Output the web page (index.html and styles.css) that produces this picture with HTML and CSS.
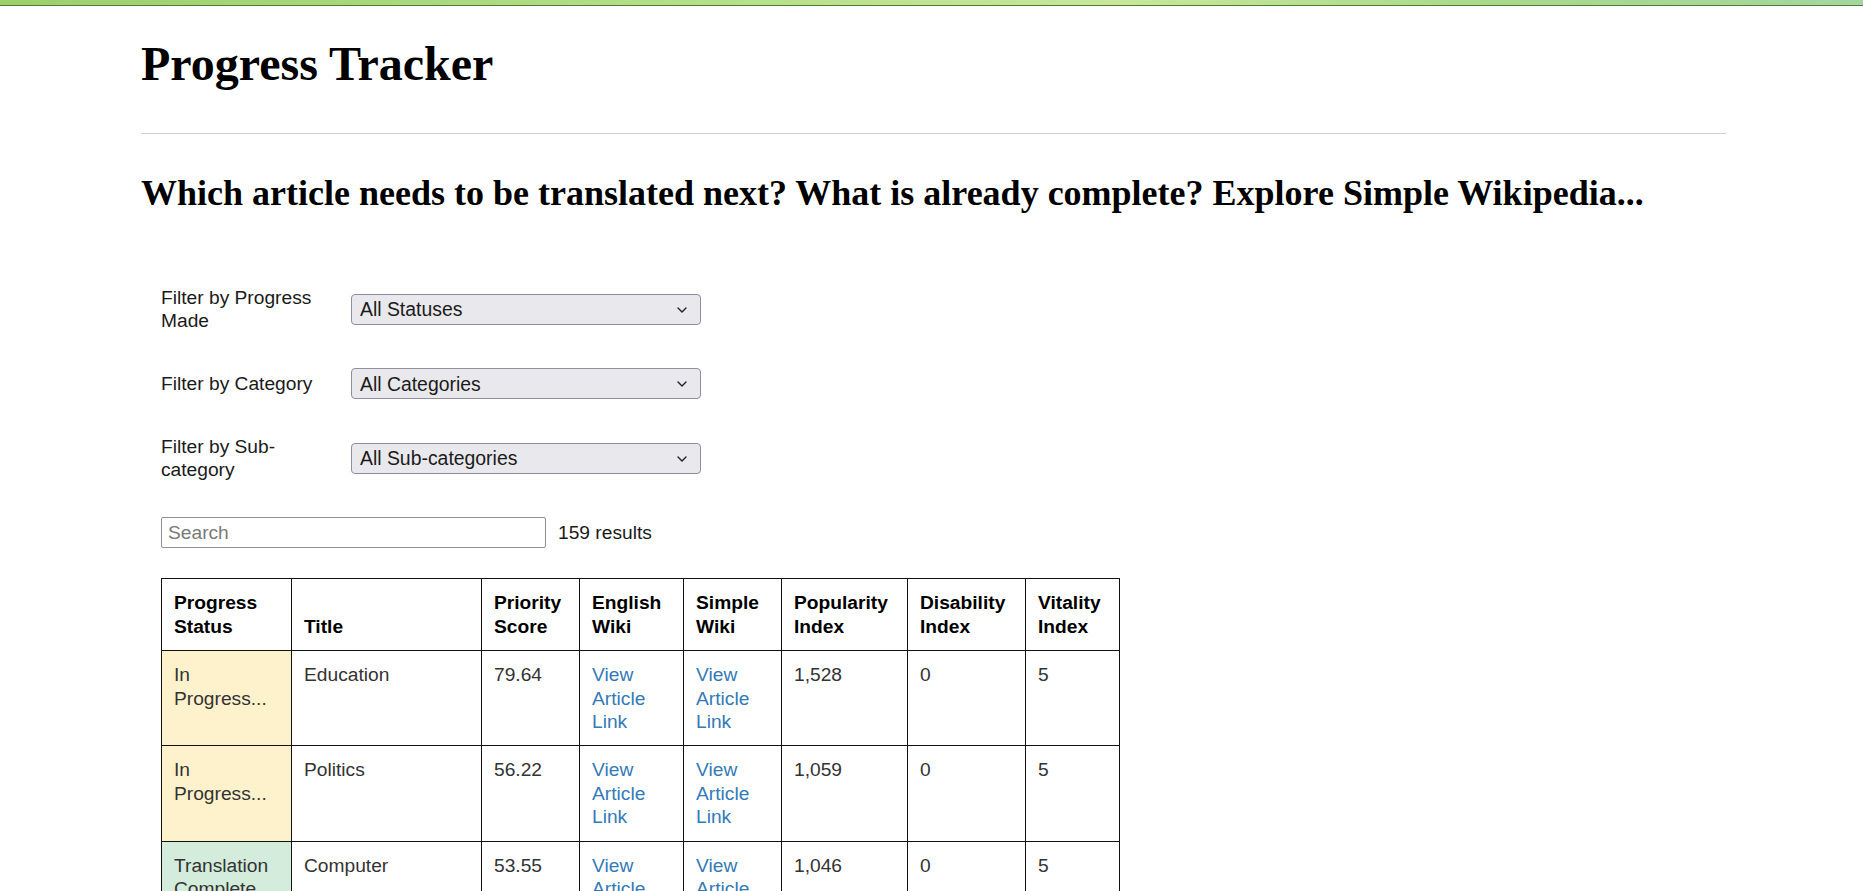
FILE: index.html
```html
<!DOCTYPE html>
<html lang="en">
<head>
<meta charset="utf-8">
<title>Progress Tracker</title>
<link rel="stylesheet" href="styles.css">
</head>
<body>
<div class="topbar"></div>
<main class="container">
  <h1 class="page-title">Progress Tracker</h1>
  <hr class="divider">
  <h2 class="subtitle">Which article needs to be translated next? What is already complete? Explore Simple Wikipedia...</h2>

  <form class="filters">
    <div class="filter-row">
      <label class="filter-label" for="status">Filter by Progress Made</label>
      <div class="select-wrap">
        <select id="status" class="filter-select">
          <option>All Statuses</option>
        </select>
        <svg class="chevron" viewBox="0 0 10 6" width="10" height="6"><path d="M1 1l4 4 4-4" fill="none" stroke="#222" stroke-width="1.4" stroke-linecap="round" stroke-linejoin="round"/></svg>
      </div>
    </div>
    <div class="filter-row">
      <label class="filter-label" for="category">Filter by Category</label>
      <div class="select-wrap">
        <select id="category" class="filter-select">
          <option>All Categories</option>
        </select>
        <svg class="chevron" viewBox="0 0 10 6" width="10" height="6"><path d="M1 1l4 4 4-4" fill="none" stroke="#222" stroke-width="1.4" stroke-linecap="round" stroke-linejoin="round"/></svg>
      </div>
    </div>
    <div class="filter-row">
      <label class="filter-label" for="subcategory">Filter by Sub-category</label>
      <div class="select-wrap">
        <select id="subcategory" class="filter-select">
          <option>All Sub-categories</option>
        </select>
        <svg class="chevron" viewBox="0 0 10 6" width="10" height="6"><path d="M1 1l4 4 4-4" fill="none" stroke="#222" stroke-width="1.4" stroke-linecap="round" stroke-linejoin="round"/></svg>
      </div>
    </div>
    <div class="search-row">
      <input class="search-input" type="text" placeholder="Search">
      <span class="result-count">159 results</span>
    </div>
  </form>

  <table class="tracker">
    <colgroup>
      <col class="c-status">
      <col class="c-title">
      <col class="c-score">
      <col class="c-en">
      <col class="c-simple">
      <col class="c-pop">
      <col class="c-dis">
      <col class="c-vit">
    </colgroup>
    <thead>
      <tr>
        <th>Progress Status</th>
        <th>Title</th>
        <th>Priority Score</th>
        <th>English Wiki</th>
        <th>Simple Wiki</th>
        <th>Popularity Index</th>
        <th>Disability Index</th>
        <th>Vitality Index</th>
      </tr>
    </thead>
    <tbody>
      <tr>
        <td class="st-progress">In Progress...</td>
        <td>Education</td>
        <td>79.64</td>
        <td><a href="#">View Article Link</a></td>
        <td><a href="#">View Article Link</a></td>
        <td>1,528</td>
        <td>0</td>
        <td>5</td>
      </tr>
      <tr>
        <td class="st-progress">In Progress...</td>
        <td>Politics</td>
        <td>56.22</td>
        <td><a href="#">View Article Link</a></td>
        <td><a href="#">View Article Link</a></td>
        <td>1,059</td>
        <td>0</td>
        <td>5</td>
      </tr>
      <tr>
        <td class="st-complete">Translation Complete</td>
        <td>Computer</td>
        <td>53.55</td>
        <td><a href="#">View Article Link</a></td>
        <td><a href="#">View Article Link</a></td>
        <td>1,046</td>
        <td>0</td>
        <td>5</td>
      </tr>
    </tbody>
  </table>
</main>
</body>
</html>
```

FILE: styles.css
```css
html, body {
  margin: 0;
  padding: 0;
  background: #ffffff;
}

body {
  font-family: "Liberation Sans", Arial, sans-serif;
  font-size: 19.2px;
  line-height: 23.4px;
  color: #000;
}

.topbar {
  height: 5px;
  background: linear-gradient(90deg, #9ccf6c 0%, #b6e08a 40%, #c8e79a 60%, #a9d98a 80%, #a4d6a0 100%);
  border-bottom: 1px solid #4f7d33;
}

.container {
  width: 1585px;
  margin-left: 141px;
}

.page-title {
  font-family: "Liberation Serif", "Times New Roman", serif;
  font-weight: bold;
  font-size: 48px;
  line-height: 56px;
  margin: 30px 0 0;
}

.divider {
  border: 0;
  border-top: 1px solid #d0d0d0;
  margin: 41px 0 0;
  height: 0;
}

.subtitle {
  font-family: "Liberation Serif", "Times New Roman", serif;
  font-weight: bold;
  font-size: 36px;
  line-height: 42px;
  margin: 38px 0 0;
}

.filters {
  display: flex;
  flex-direction: column;
  gap: 35.6px;
  margin: 72px 0 0;
  padding-left: 20px;
}

.filter-row {
  display: grid;
  grid-template-columns: 170px 350px;
  column-gap: 20px;
  align-items: center;
}

.filter-label {
  color: #1a1a1a;
}

.select-wrap {
  position: relative;
  width: 350px;
  height: 31px;
}

.filter-select {
  appearance: none;
  -webkit-appearance: none;
  width: 350px;
  height: 31px;
  box-sizing: border-box;
  background: #e9e9ed;
  border: 1px solid #8f8f9d;
  border-radius: 4px;
  font-family: "Liberation Sans", Arial, sans-serif;
  font-size: 19.4px;
  color: #1b1b1b;
  padding: 0 30px 0 8px;
  margin: 0;
}

.chevron {
  position: absolute;
  right: 14px;
  top: 13px;
  pointer-events: none;
}

.search-row {
  display: flex;
  align-items: center;
  gap: 12px;
}

.search-input {
  width: 385px;
  height: 31px;
  box-sizing: border-box;
  border: 1px solid #8f8f9d;
  border-radius: 2px;
  padding: 0 6px;
  margin: 0;
  font-family: "Liberation Sans", Arial, sans-serif;
  font-size: 19.2px;
  color: #1b1b1b;
  background: #fff;
}

.search-input::placeholder {
  color: #7a7a7a;
}

.result-count {
  color: #1a1a1a;
}

.tracker {
  border-collapse: collapse;
  table-layout: fixed;
  width: 958px;
  margin: 30px 0 0 20px;
}

.c-status { width: 130px; }
.c-title { width: 190px; }
.c-score { width: 98px; }
.c-en { width: 104px; }
.c-simple { width: 98px; }
.c-pop { width: 126px; }
.c-dis { width: 118px; }
.c-vit { width: 94px; }

.tracker th,
.tracker td {
  border: 1px solid #111;
  padding: 12px 11px 12px 12px;
  text-align: left;
}

.tracker th {
  font-weight: bold;
  color: #000;
  vertical-align: bottom;
}

.tracker td {
  color: #333;
  vertical-align: top;
}

.tracker a {
  color: #337ab7;
  text-decoration: none;
}

.st-progress {
  background: #fef2cd;
}

.st-complete {
  background: #d4ecdc;
}
```
